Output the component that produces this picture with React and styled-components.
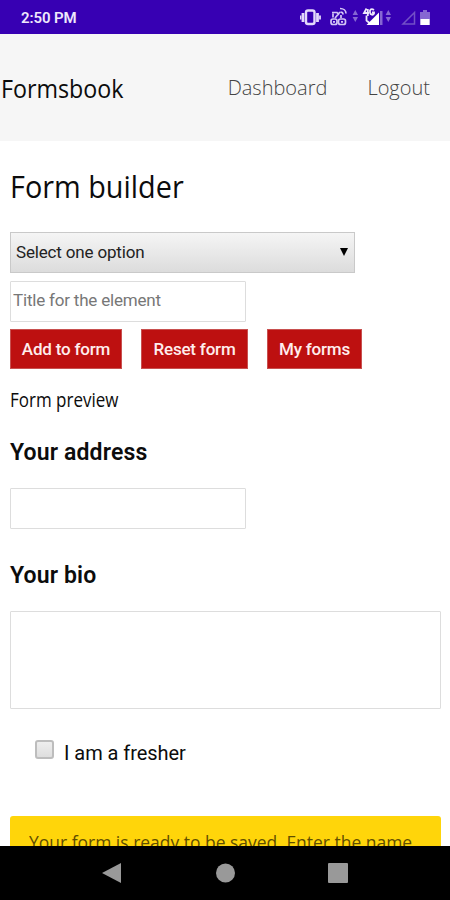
import React from 'react'
import styled, { createGlobalStyle } from 'styled-components';

const GlobalStyle=createGlobalStyle`
    *{
        box-sizing:border-box;
    }
    body{
        margin:0;
        background-color:white;
    }
    input,textarea,button{
        font-family:Roboto, sans-serif;
        margin:0;
    }
`
const Screen=styled.div`
    display:flex;
    flex-direction:column;
    width:450px;
    height:900px;
    overflow:hidden;
    color:#0c0c0c;
    background-color:white;
    font-family:Roboto, sans-serif;
`
const StatusBar=styled.div`
    display:flex;
    flex:none;
    justify-content:space-between;
    align-items:center;
    height:34px;
    padding-left:21px;
    background-color:#3700b3;
`
const Time=styled.span`
    padding-top:2px;
    color:#eee8fb;
    font-size:15px;
    font-weight:600;
    letter-spacing:-0.1px;
`
const Header=styled.header`
    display:flex;
    flex:none;
    justify-content:space-between;
    align-items:center;
    height:107px;
    padding:0 20px 0 1px;
    background-color:#f6f6f6;
    font-family:"Open Sans", sans-serif;
`
const Brand=styled.span`
    font-size:25px;
    line-height:34px;
    transform:scaleX(0.93);
    transform-origin:left;
`
const Links=styled.nav`
    display:flex;
    gap:40px;
`
const NavLink=styled.a`
    color:#444;
    font-size:20px;
    font-weight:300;
    line-height:34px;
`
const Content=styled.main`
    display:flex;
    flex-direction:column;
    align-items:flex-start;
    flex:1;
    min-height:0;
    overflow:hidden;
    padding:0 9px 0 10px;
`
const Title=styled.h1`
    margin:25px 0;
    font-family:"Open Sans", sans-serif;
    font-size:31px;
    font-weight:400;
    line-height:41px;
    transform:scaleX(0.93);
    transform-origin:left;
`
const Select=styled.div`
    display:flex;
    flex:none;
    justify-content:space-between;
    align-items:center;
    width:345px;
    height:41px;
    padding:0 6px 1px 5px;
    border:1px solid #c9c9c9;
    background:linear-gradient(#f5f5f5, #dcdcdc);
    color:#222;
    font-size:17px;
    letter-spacing:-0.17px;
`
const Input=styled.input`
    flex:none;
    width:236px;
    height:41px;
    padding:0 2px 3px 2px;
    border:1px solid #ddd;
    border-radius:1px;
    font-size:17px;
    letter-spacing:-0.2px;
    &::placeholder{
        color:#777;
        opacity:1;
    }
`
const TitleInput=styled(Input)`
    margin-top:8px;
`
const Buttons=styled.div`
    display:flex;
    flex:none;
    gap:19px;
    margin-top:7px;
`
const Button=styled.button`
    width:${p => p.$width};
    height:40px;
    padding:0 0 1px;
    border:1px solid #c8504f;
    background-color:#bd1010;
    color:#ffeded;
    font-size:17px;
    font-weight:500;
    letter-spacing:-0.2px;
    white-space:nowrap;
`
const Preview=styled.h2`
    margin:18px 0 0;
    font-family:"Open Sans", sans-serif;
    font-size:20px;
    font-weight:400;
    line-height:26px;
    transform:scaleX(0.85);
    transform-origin:left;
`
const Label=styled.label`
    margin:${p => p.$margin};
    font-size:23px;
    font-weight:600;
    line-height:30px;
    letter-spacing:0.15px;
`
const TextArea=styled.textarea`
    display:block;
    flex:none;
    width:431px;
    height:98px;
    border:1px solid #ddd;
    border-radius:1px;
    resize:none;
`
const CheckRow=styled.label`
    display:flex;
    align-items:center;
    gap:10px;
    height:30px;
    margin:31px 0 0 25px;
    font-size:20px;
    letter-spacing:-0.05px;
`
const Checkbox=styled.input`
    appearance:none;
    width:19px;
    height:19px;
    margin-bottom:6px;
    border:2px solid #bdbdbd;
    border-radius:3px;
    background:linear-gradient(#eee, #dedede);
`
const Notice=styled.div`
    flex:none;
    width:431px;
    height:80px;
    margin-top:51px;
    padding:13px 19px;
    border-radius:3px;
    background-color:#ffd50a;
    color:#5f4d00;
    font-family:"Open Sans", sans-serif;
    font-size:19px;
    font-weight:400;
    line-height:26px;
    white-space:nowrap;
`
const NoticeText=styled.span`
    display:inline-block;
    transform:scaleX(0.919);
    transform-origin:left;
`
const SystemNav=styled.div`
    display:flex;
    flex:none;
    justify-content:center;
    align-items:center;
    gap:93px;
    height:54px;
    background-color:black;
    svg{
        display:block;
        fill:#999;
    }
`

const StatusIcons = () => (
  <svg width="150" height="34" viewBox="300 0 150 34">
    {/* vibrate */}
    <g fill="none" stroke="#e3d9fb">
      <rect x="306" y="10.5" width="8.5" height="13.5" rx="2" strokeWidth="2.4"/>
      <path d="M303 13v9M317.5 13v9" strokeWidth="2.8"/>
      <path d="M300.500 15.500v4M320 15.500v4" strokeWidth="1.8"/>
    </g>
    {/* calling over wifi */}
    <g fill="none" stroke="#d3c5f5" strokeWidth="1.7">
      <path d="M332 12.500h5l2 2.500M333 13.500v4M335 18l5-6M340 8.500c3.500 0 6 2 6 5M340.500 12c1.500 0 2.500 1 2.500 2.500M341 15v3"/>
      <rect x="331" y="19" width="6" height="5.500" rx="2"/>
      <rect x="338.500" y="19" width="7" height="5.500" rx="2"/>
      <path d="M333 21.800h2M341 21.800h2"/>
    </g>
    <path d="M355.300 10l2.700 5h-5.400zM355.300 22l2.700-5h-5.400z" fill="#8667d2"/>
    {/* 4g signal */}
    <g fill="none" stroke="#eee8fb" strokeWidth="1.800">
      <path d="M366.500 8.500l-2.500 4.500h5M367.800 9v7M374 10c-3-2-4.500 0-4 2.500s3 3 4 1v-1h-2M366.500 15.500v5l3 2.500"/>
    </g>
    <path d="M379 12.500v12.500h-12.500z" fill="white"/>
    <path d="M380 11h2.500v14h-2.500z" fill="#8667d2"/>
    <path d="M388.300 10l2.700 5h-5.400zM388.300 22l2.700-5h-5.400z" fill="#8667d2"/>
    {/* empty signal */}
    <path d="M414.500 12.500v11.500h-11.500z" fill="none" stroke="#7350c7" strokeWidth="1.500"/>
    {/* battery */}
    <path d="M423 10h4v2h3v13h-10v-13h3z" fill="#8667d2"/>
    <path d="M420.500 19h9v6h-9z" fill="white"/>
  </svg>
)

const App = () => {
  return (
    <Screen>
        <GlobalStyle/>
        <StatusBar>
            <Time>2:50 PM</Time>
            <StatusIcons/>
        </StatusBar>
        <Header>
            <Brand>Formsbook</Brand>
            <Links>
                <NavLink>Dashboard</NavLink>
                <NavLink>Logout</NavLink>
            </Links>
        </Header>
        <Content>
            <Title>Form builder</Title>
            <Select>
                <span>Select one option</span>
                <svg width="8" height="9" viewBox="0 0 8 9"><path d="M0 0h8L4 8z"/></svg>
            </Select>
            <TitleInput placeholder="Title for the element"/>
            <Buttons>
                <Button $width="112px">Add to form</Button>
                <Button $width="107px">Reset form</Button>
                <Button $width="95px">My forms</Button>
            </Buttons>
            <Preview>Form preview</Preview>
            <Label $margin="25px 0 20px">Your address</Label>
            <Input/>
            <Label $margin="32px 0 20px">Your bio</Label>
            <TextArea/>
            <CheckRow>
                <Checkbox type="checkbox"/>
                <span>I am a fresher</span>
            </CheckRow>
            <Notice>
                <NoticeText>Your form is ready to be saved. Enter the name</NoticeText>
            </Notice>
        </Content>
        <SystemNav>
            <svg width="19" height="20" viewBox="0 0 19 20"><path d="M19 0v20L0 10z"/></svg>
            <svg width="21" height="20" viewBox="0 0 21 20"><circle cx="11.5" cy="10" r="9.5"/></svg>
            <svg width="20" height="20" viewBox="0 0 20 20"><rect width="20" height="20" rx="1"/></svg>
        </SystemNav>
    </Screen>
  )
}

export default App;
